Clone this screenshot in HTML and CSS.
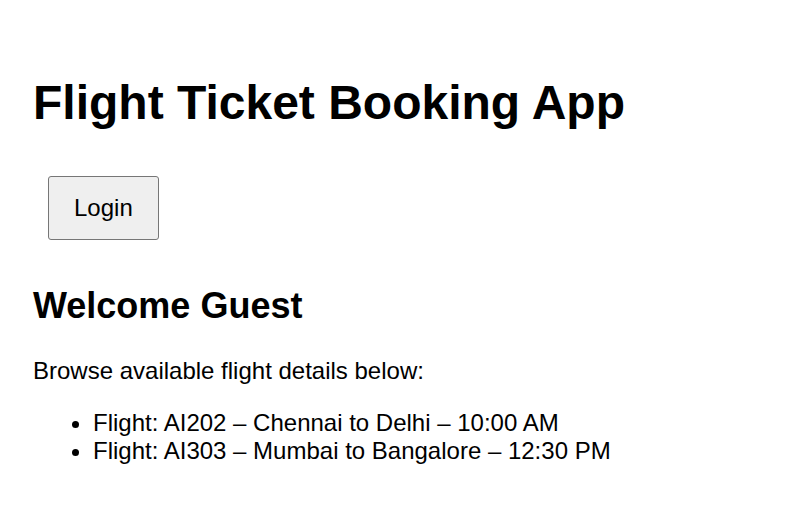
FILE: index.html
```html
<!DOCTYPE html>
<html lang="en">
<head>
<meta charset="utf-8">
<title>Flight Ticket Booking App</title>
<link rel="stylesheet" href="styles.css">
</head>
<body>
<h1 class="title">Flight Ticket Booking App</h1>
<div class="actions"><button class="btn">Login</button></div>
<h2 class="welcome">Welcome Guest</h2>
<p class="intro">Browse available flight details below:</p>
<ul class="flights">
<li>Flight: AI202 – Chennai to Delhi – 10:00 AM</li>
<li>Flight: AI303 – Mumbai to Bangalore – 12:30 PM</li>
</ul>
</body>
</html>
```
FILE: styles.css
```css
html, body {
  background: #ffffff;
}
body {
  margin: 0;
  padding: 42.5px 33px;
  font-family: "Liberation Sans", Arial, sans-serif;
  font-size: 24px;
  color: #000000;
}
.title {
  font-size: 48px;
  font-weight: bold;
  margin: 32px 0;
}
.actions {
  display: flex;
  padding: 14px 15px 15px;
}
.btn {
  font-family: "Liberation Sans", Arial, sans-serif;
  font-size: 24px;
  line-height: 28px;
  padding: 17px 25px;
  background: #efefef;
  border: 1px solid #767676;
  border-radius: 3px;
  color: #000000;
}
.welcome {
  font-size: 36px;
  font-weight: bold;
  margin: 30px 0;
}
.intro {
  margin: 24px 0;
}
.flights {
  margin: 24px 0;
  padding-left: 60px;
}
```
